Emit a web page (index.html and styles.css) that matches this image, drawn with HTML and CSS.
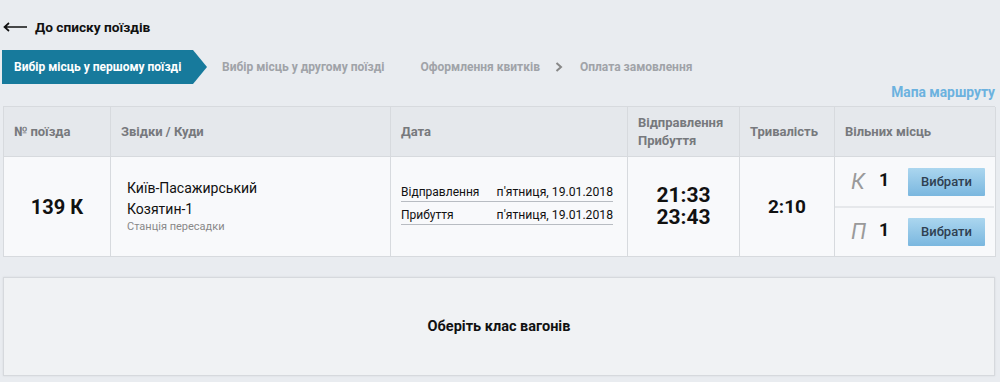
FILE: index.html
```html
<!DOCTYPE html>
<html lang="uk">
<head>
<meta charset="utf-8">
<link rel="stylesheet" href="styles.css">
</head>
<body>
<div class="page">
  <a class="back" href="#">
    <svg class="back-icon" width="25" height="10" viewBox="0 0 25 10"><path d="M24 5H2M6 1L1.5 5L6 9" fill="none" stroke="#111" stroke-width="1.7"/></svg>
    <span>До списку поїздів</span>
  </a>
  <nav class="steps">
    <div class="step active">Вибір місць у першому поїзді</div>
    <div class="step s2">Вибір місць у другому поїзді</div>
    <div class="step s3">Оформлення квитків</div>
    <svg class="chev" width="8" height="10" viewBox="0 0 8 10"><path d="M1.5 1L6 5L1.5 9" fill="none" stroke="#888" stroke-width="2"/></svg>
    <div class="step s4">Оплата замовлення</div>
  </nav>
  <div class="maplink"><a href="#">Мапа маршруту</a></div>
  <div class="table">
    <div class="th c1">№ поїзда</div>
    <div class="th c2">Звідки / Куди</div>
    <div class="th c3">Дата</div>
    <div class="th c4">Відправлення<br>Прибуття</div>
    <div class="th c5">Тривалість</div>
    <div class="th c6">Вільних місць</div>

    <div class="td c1 num">139 К</div>
    <div class="td c2 route">
      <div class="st">Київ-Пасажирський</div>
      <div class="st">Козятин-1</div>
      <div class="transfer">Станція пересадки</div>
    </div>
    <div class="td c3 dates">
      <div class="drow"><span>Відправлення</span><span class="dv">п'ятниця, 19.01.2018</span></div>
      <div class="drow"><span>Прибуття</span><span class="dv">п'ятниця, 19.01.2018</span></div>
    </div>
    <div class="td c4 times"><div>21:33</div><div>23:43</div></div>
    <div class="td c5 dur">2:10</div>
    <div class="td c6 seats">
      <div class="seat"><span class="cls">К</span><span class="cnt">1</span><button class="btn">Вибрати</button></div>
      <div class="seat"><span class="cls">П</span><span class="cnt">1</span><button class="btn">Вибрати</button></div>
    </div>
  </div>
  <div class="panel">Оберіть клас вагонів</div>
</div>
</body>
</html>
```
FILE: styles.css
```css
* { box-sizing: border-box; }
html, body { margin: 0; padding: 0; }
body {
  background: #e9ecf0;
  font-family: Roboto, "Liberation Sans", sans-serif;
  color: #111;
  width: 1000px;
  height: 382px;
  overflow: hidden;
}
.page { padding: 0 5px 0 3px; }
.back {
  display: flex;
  align-items: center;
  gap: 7px;
  height: 20px;
  margin-top: 17px;
  text-decoration: none;
  color: #111;
  font-weight: 700;
  font-size: 13.7px;
}
.back-icon { display: block; }
.steps {
  display: flex;
  align-items: center;
  height: 34px;
  margin-top: 13px;
  margin-left: -1px;
}
.step {
  font-size: 12px;
  font-weight: 700;
  color: #a0a3a8;
}
.step.active {
  background: #177a9c;
  color: #fff;
  height: 34px;
  line-height: 34px;
  padding: 0 0 0 12px;
  width: 205px;
  clip-path: polygon(0 0, 191px 0, 205px 50%, 191px 100%, 0 100%);
}
.s2 { margin-left: 15px; }
.s3 { margin-left: 36px; }
.chev { margin-left: 15px; margin-right: 17px; }
.maplink {
  text-align: right;
  margin-top: 0;
  height: 22px;
  line-height: 16px;
}
.maplink a {
  color: #6cb2df;
  font-weight: 700;
  font-size: 13.8px;
  text-decoration: none;
}
.table {
  display: grid;
  grid-template-columns: 107px 280px 237px 112px 95px 161px;
  grid-template-rows: 50px 100px;
  border: 1px solid #d7dade;
  border-right: none;
  border-bottom: none;
  width: 992px;
}
.th, .td {
  border-right: 1px solid #d7dade;
  border-bottom: 1px solid #d7dade;
}
.th {
  background: #e5e8ec;
  color: #77797d;
  font-weight: 700;
  font-size: 13px;
  display: flex;
  align-items: center;
  padding-left: 10px;
  line-height: 18px;
}
.td { background: #f8f9fb; }
.num {
  display: flex;
  align-items: center;
  justify-content: center;
  font-size: 20px;
  font-weight: 700;
}
.route {
  padding: 21px 0 0 16px;
}
.st { font-size: 14px; line-height: 21px; }
.transfer { font-size: 11px; color: #888; line-height: 14px; }
.dates {
  padding: 27px 14px 0 10px;
}
.drow {
  display: flex;
  justify-content: space-between;
  align-items: baseline;
  font-size: 12px;
  line-height: 17px;
  border-bottom: 1px solid #b8bcc2;
  margin-bottom: 5px;
}
.dv { font-size: 12.2px; }
.times {
  display: flex;
  flex-direction: column;
  justify-content: center;
  align-items: center;
  font-size: 21px;
  font-weight: 700;
  line-height: 22px;
  padding-bottom: 2px;
}
.dur {
  display: flex;
  align-items: center;
  justify-content: center;
  font-size: 19px;
  font-weight: 700;
}
.seats {
  display: flex;
  flex-direction: column;
}
.seat {
  display: flex;
  align-items: center;
  height: 49px;
  padding-left: 16px;
  margin-right: 1px;
}
.seat + .seat { border-top: 2px solid #e6e8eb; }
.cls {
  font-style: italic;
  color: #9a9a9a;
  font-size: 22px;
  width: 28px;
}
.cnt {
  font-weight: 700;
  font-size: 18px;
  width: 29px;
  margin-top: -4px;
}
.btn {
  width: 77px;
  height: 28px;
  border: none;
  border-radius: 1px;
  background: linear-gradient(#abd6ef, #7ab7df);
  color: #2f4050;
  font-family: Roboto, "Liberation Sans", sans-serif;
  font-size: 13px;
  font-weight: 500;
  padding: 0;
}
.panel {
  margin-top: 20px;
  height: 99px;
  width: 992px;
  background: #f0f2f4;
  border: 1px solid #d6d9dd;
  box-shadow: 0 0 2px rgba(0,0,0,0.08);
  display: flex;
  align-items: center;
  justify-content: center;
  font-weight: 700;
  font-size: 14.5px;
}
```
